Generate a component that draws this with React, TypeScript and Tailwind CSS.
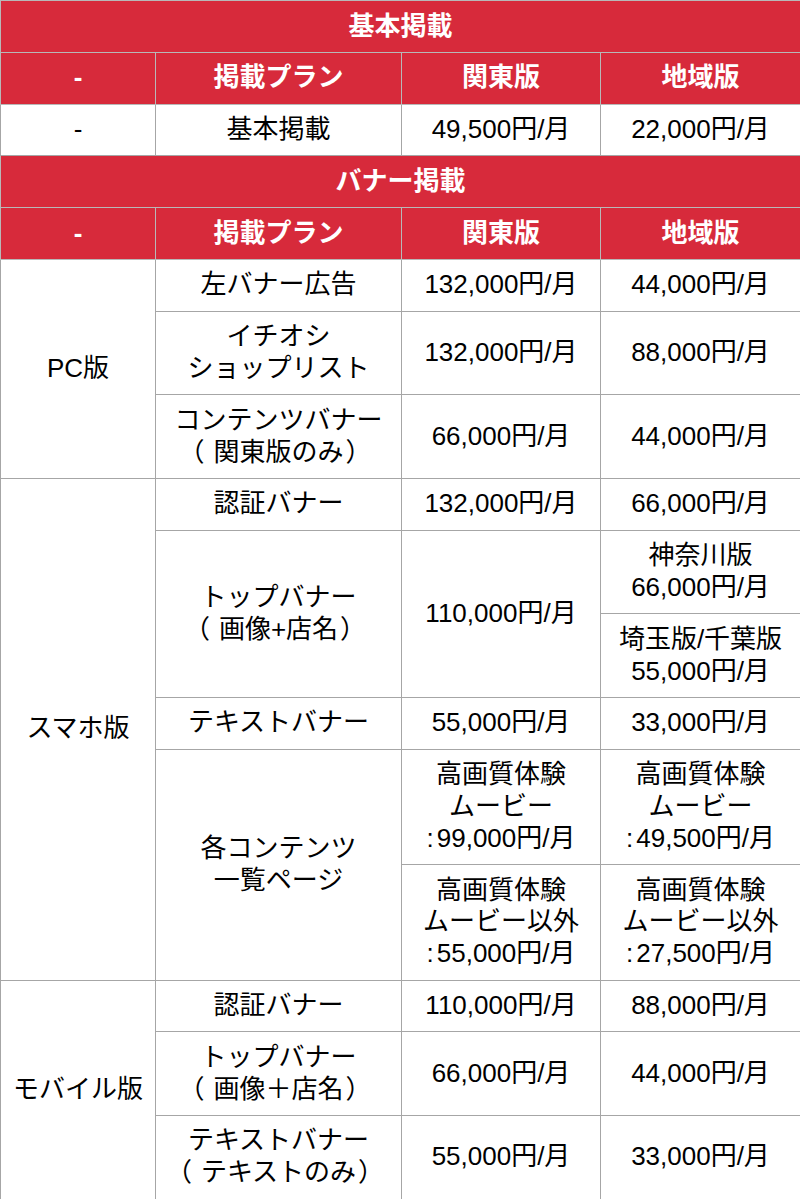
const font = { fontFamily: '"Liberation Sans", "Noto Sans CJK JP", sans-serif' }

function Band({ title }: { title: string }) {
  return (
    <tr>
      <th colSpan={4} className="bg-[#d72a3b] text-white font-bold border border-[#b8b8b8] py-[9.5px]">{title}</th>
    </tr>
  )
}

function Head() {
  return (
    <tr className="bg-[#d72a3b] text-white font-bold">
      <th className="border border-[#b8b8b8] py-[9.5px]">-</th>
      <th className="border border-[#b8b8b8] py-[9.5px]">掲載プラン</th>
      <th className="border border-[#b8b8b8] py-[9.5px]">関東版</th>
      <th className="border border-[#b8b8b8] py-[9.5px]">地域版</th>
    </tr>
  )
}

function Td({ children, rowSpan }: { children: React.ReactNode; rowSpan?: number }) {
  return (
    <td rowSpan={rowSpan} className="border border-[#a6a6a6] py-[9.5px] text-center align-middle">
      {children}
    </td>
  )
}

// full-width brackets, opening one set a little away from the text
function Paren({ children }: { children: React.ReactNode }) {
  return (
    <>
      <span className="inline-block w-[26px] -ml-[9px] mr-[9px]">（</span>
      {children}
      <span className="inline-block w-[26px] pl-[2px] text-left">）</span>
    </>
  )
}

// colon-prefixed price, the colon sits a little apart from the digits
function Colon({ v }: { v: string }) {
  return (
    <>
      <span className="mr-[3px]">:</span>
      {v}
    </>
  )
}

export default function App() {
  return (
    <div className="w-[800px] bg-white" style={font}>
      <table className="w-full table-fixed border-collapse text-[26px] leading-[31.8px] text-black text-center">
        <colgroup>
          <col className="w-[155px]" />
          <col className="w-[246px]" />
          <col className="w-[199px]" />
          <col className="w-[200px]" />
        </colgroup>
        <tbody>
          <Band title="基本掲載" />
          <Head />
          <tr>
            <Td>-</Td>
            <Td>基本掲載</Td>
            <Td>49,500円/月</Td>
            <Td>22,000円/月</Td>
          </tr>
          <Band title="バナー掲載" />
          <Head />
          <tr>
            <Td rowSpan={3}>PC版</Td>
            <Td>左バナー広告</Td>
            <Td>132,000円/月</Td>
            <Td>44,000円/月</Td>
          </tr>
          <tr>
            <Td>イチオシ<br />ショップリスト</Td>
            <Td>132,000円/月</Td>
            <Td>88,000円/月</Td>
          </tr>
          <tr>
            <Td>コンテンツバナー<br /><Paren>関東版のみ</Paren></Td>
            <Td>66,000円/月</Td>
            <Td>44,000円/月</Td>
          </tr>
          <tr>
            <Td rowSpan={6}>スマホ版</Td>
            <Td>認証バナー</Td>
            <Td>132,000円/月</Td>
            <Td>66,000円/月</Td>
          </tr>
          <tr>
            <Td rowSpan={2}>トップバナー<br /><Paren>画像+店名</Paren></Td>
            <Td rowSpan={2}>110,000円/月</Td>
            <Td>神奈川版<br />66,000円/月</Td>
          </tr>
          <tr>
            <Td>埼玉版/千葉版<br />55,000円/月</Td>
          </tr>
          <tr>
            <Td>テキストバナー</Td>
            <Td>55,000円/月</Td>
            <Td>33,000円/月</Td>
          </tr>
          <tr>
            <Td rowSpan={2}>各コンテンツ<br />一覧ページ</Td>
            <Td>高画質体験<br />ムービー<br /><Colon v="99,000円/月" /></Td>
            <Td>高画質体験<br />ムービー<br /><Colon v="49,500円/月" /></Td>
          </tr>
          <tr>
            <Td>高画質体験<br />ムービー以外<br /><Colon v="55,000円/月" /></Td>
            <Td>高画質体験<br />ムービー以外<br /><Colon v="27,500円/月" /></Td>
          </tr>
          <tr>
            <Td rowSpan={3}>モバイル版</Td>
            <Td>認証バナー</Td>
            <Td>110,000円/月</Td>
            <Td>88,000円/月</Td>
          </tr>
          <tr>
            <Td>トップバナー<br /><Paren>画像＋店名</Paren></Td>
            <Td>66,000円/月</Td>
            <Td>44,000円/月</Td>
          </tr>
          <tr>
            <Td>テキストバナー<br /><Paren>テキストのみ</Paren></Td>
            <Td>55,000円/月</Td>
            <Td>33,000円/月</Td>
          </tr>
        </tbody>
      </table>
    </div>
  )
}
